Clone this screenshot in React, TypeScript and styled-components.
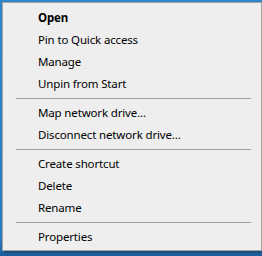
import React from "react";
import styled, { createGlobalStyle } from "styled-components";

const GlobalStyle = createGlobalStyle`
  html, body {
    margin: 0;
    padding: 0;
  }
  body {
    width: 262px;
    height: 256px;
    overflow: hidden;
    background: linear-gradient(180deg, #2f86cc 0%, #2a7cc0 92%, #1b5e9c 100%);
  }
`;

type Entry = { label: string; bold?: boolean } | "sep";

const entries: Entry[] = [
  { label: "Open", bold: true },
  { label: "Pin to Quick access" },
  { label: "Manage" },
  { label: "Unpin from Start" },
  "sep",
  { label: "Map network drive..." },
  { label: "Disconnect network drive..." },
  "sep",
  { label: "Create shortcut" },
  { label: "Delete" },
  { label: "Rename" },
  "sep",
  { label: "Properties" },
];

export default function App() {
  return (
    <>
      <GlobalStyle />
      <Screen>
        <Menu role="menu">
          {entries.map((e, i) =>
            e === "sep" ? (
              <Separator key={i} />
            ) : (
              <Item key={i} role="menuitem" bold={e.bold}>
                {e.label}
              </Item>
            )
          )}
        </Menu>
      </Screen>
    </>
  );
}

const Screen = styled.div`
  padding: 2px 0 0 2px;
`;

const Menu = styled.div`
  width: 254px;
  padding: 4px 2px 2px 2px;
  background: #eeeeee;
  border: 1px solid #a3a3a3;
  box-shadow: 2px 2px 2px rgba(0, 0, 0, 0.25);
  display: flex;
  flex-direction: column;
  font-family: "Noto Sans", "Open Sans", sans-serif;
  font-size: 11.5px;
  letter-spacing: -0.15px;
  color: #000;
`;

const Item = styled.div<{ bold?: boolean }>`
  height: 22px;
  line-height: 22px;
  padding-left: 33px;
  font-weight: ${(p) => (p.bold ? 700 : 400)};
  white-space: nowrap;
`;

const Separator = styled.div`
  height: 7px;
  display: flex;
  align-items: center;
  padding: 0 8px 0 11px;

  &::after {
    content: "";
    flex: 1;
    border-top: 1px solid #a0a0a0;
  }
`;
